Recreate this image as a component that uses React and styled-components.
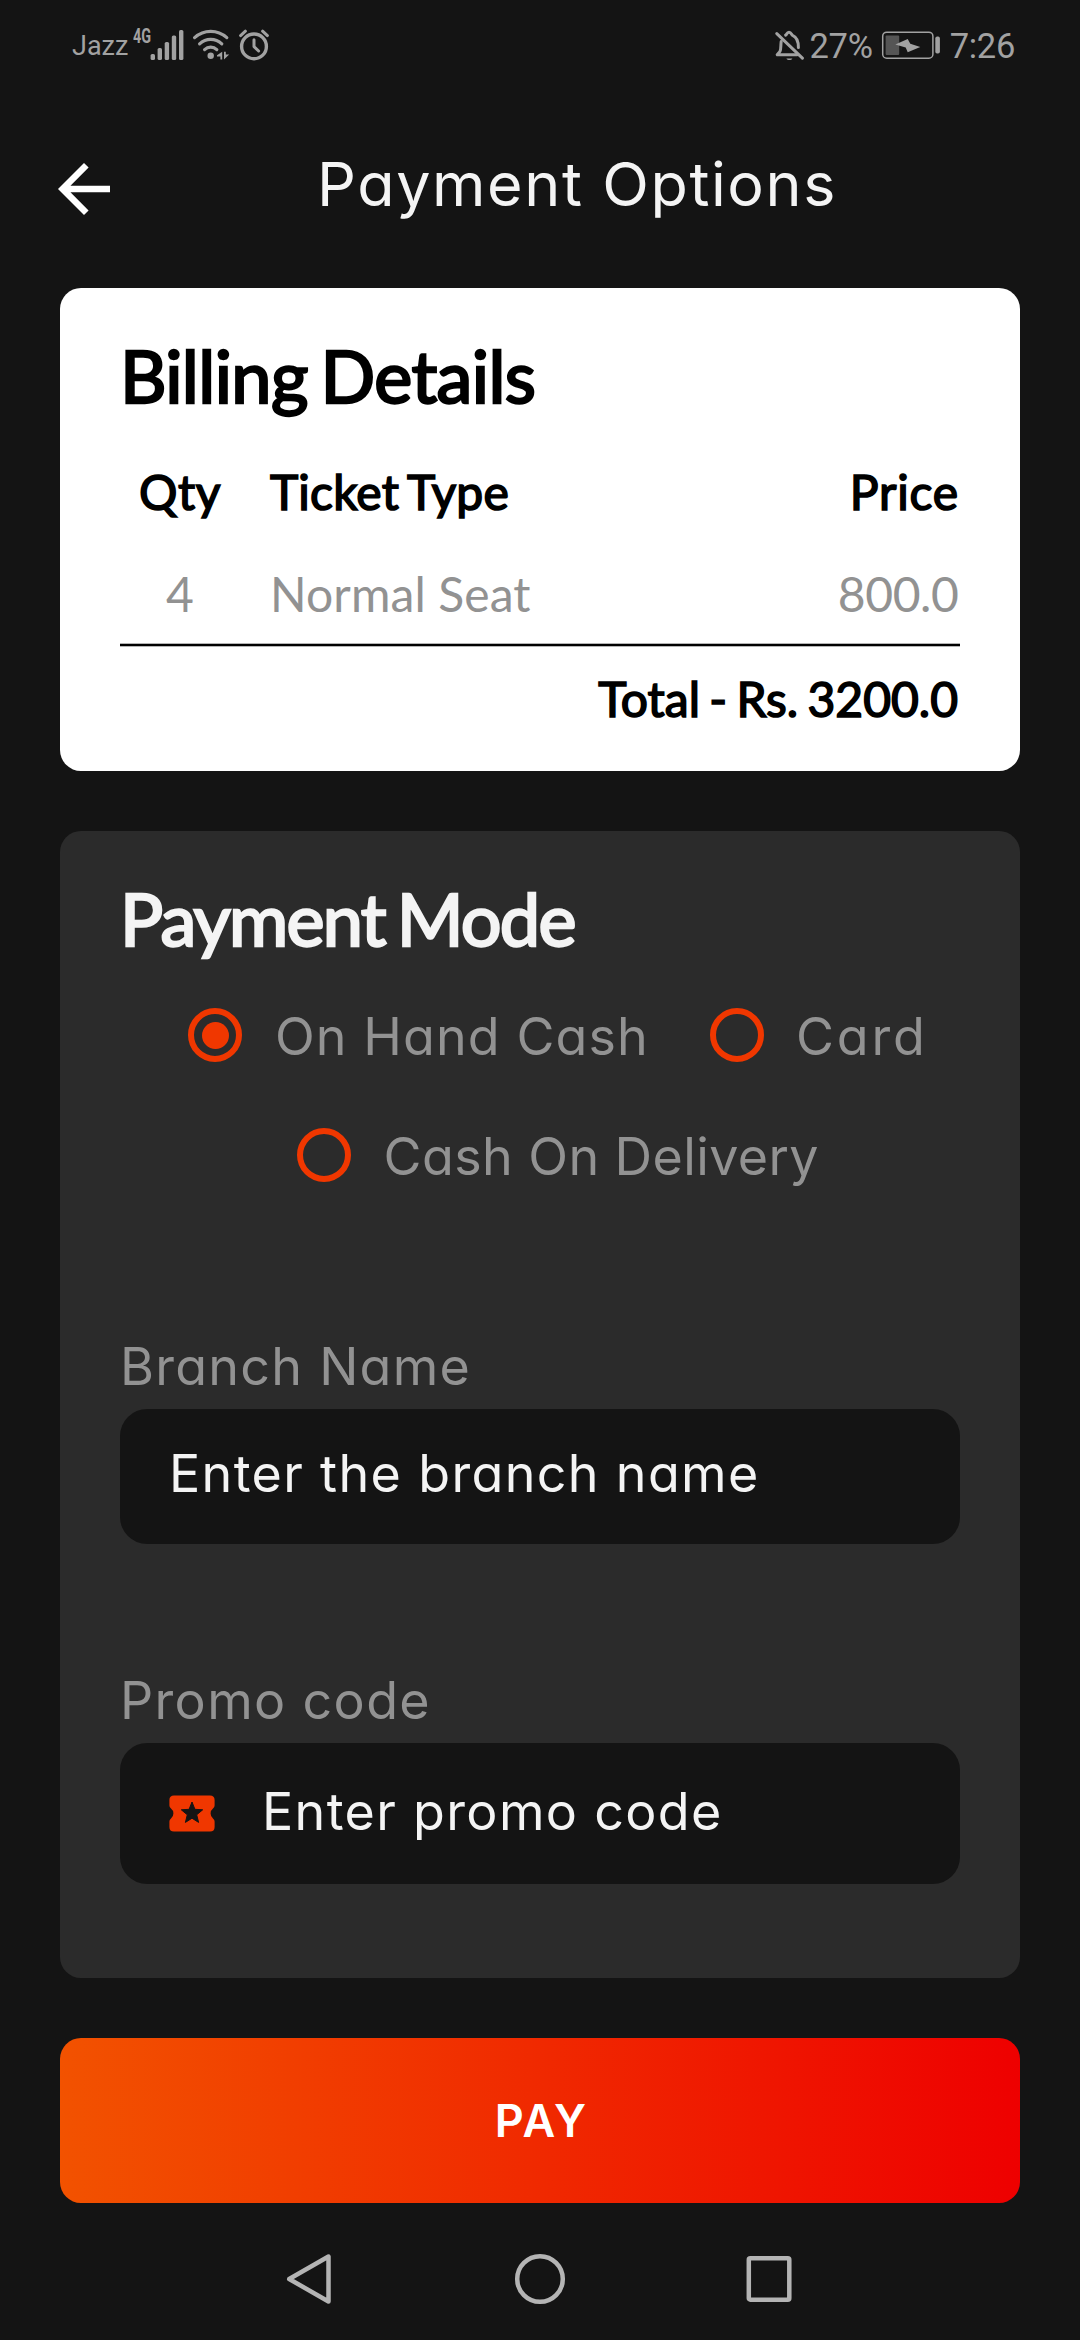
import React, { useState } from "react";
import styled, { createGlobalStyle } from "styled-components";

const GlobalStyle = createGlobalStyle`
  *, *::before, *::after { box-sizing: border-box; }
  body { margin: 0; background: #141414; }
`;

const sans = `Inter, "Open Sans", sans-serif`;
const lato = `Lato, "Open Sans", sans-serif`;

const Screen = styled.div`
  width: 1080px;
  height: 2340px;
  background: #141414;
  display: flex;
  flex-direction: column;
  font-family: ${sans};
  font-feature-settings: "cv11";
  overflow: hidden;
`;

/* ---------- status bar ---------- */

const StatusBar = styled.div`
  height: 90px;
  padding: 0 65px 0 72px;
  display: flex;
  justify-content: space-between;
  color: #a2a2a2;
  font-family: Roboto, sans-serif;
`;

const StatusGroup = styled.div`
  display: flex;
  align-items: center;
`;

const Carrier = styled.span`
  font-size: 27px;
  line-height: 32px;
  padding-top: 1px;
  width: 61px;
`;

const NetworkType = styled.span`
  align-self: flex-start;
  margin-top: 24px;
  width: 17px;
  font-size: 20px;
  line-height: 24px;
  font-weight: 700;
  transform: scaleX(0.72);
  transform-origin: left center;
`;

const StatusText = styled.span`
  font-size: 34.5px;
  line-height: 40px;
  padding-top: 2px;
  letter-spacing: -0.3px;
`;

const StatusIcon = styled.svg`
  display: block;
  flex: none;
  margin-left: ${(p) => p.$gap || 0}px;
  margin-right: ${(p) => p.$after || 0}px;
`;

/* ---------- header ---------- */

const Header = styled.header`
  height: 198px;
  padding: 60px 0 0 45px;
  display: flex;
  align-items: flex-start;
`;

const BackButton = styled.button`
  width: 78px;
  height: 78px;
  padding: 0;
  border: 0;
  background: none;
  color: #fff;
  flex: none;
`;

const HeaderTitle = styled.h1`
  margin: 0 0 0 194px;
  font-size: 61px;
  font-weight: 400;
  line-height: 69px;
  letter-spacing: 1.6px;
  color: #f4f4f4;
  white-space: nowrap;
`;

/* ---------- cards ---------- */

const Card = styled.section`
  margin: 0 60px;
  padding: 42px 60px 0;
  border-radius: 21px;
`;

const BillingCard = styled(Card)`
  height: 483px;
  background: #fff;
  font-family: ${lato};
`;

const PaymentCard = styled(Card)`
  height: 1147px;
  margin-top: 60px;
  background: #2b2b2b;
`;

const CardTitle = styled.h2`
  margin: 0;
  font-family: ${lato};
  font-size: 72px;
  font-weight: 400;
  line-height: 90px;
  letter-spacing: ${(p) => p.$tracking}px;
  word-spacing: -5px;
  color: ${(p) => p.$color};
  -webkit-text-stroke: 2.4px ${(p) => p.$color};
  white-space: nowrap;
`;

const TicketRow = styled.div`
  display: grid;
  grid-template-columns: 120px 1fr auto;
  align-items: center;
  height: ${(p) => p.$height}px;
  font-size: 48px;
  color: #929292;
`;

const HeadRow = styled(TicketRow)`
  margin-top: 20px;
  color: #000;
  word-spacing: -3px;
  -webkit-text-stroke: 1.6px #000;
`;

const Cell = styled.span`
  white-space: nowrap;
  text-align: ${(p) => p.$align || "left"};
  padding-left: ${(p) => p.$indent || 0}px;
  padding-right: ${(p) => p.$end || 0}px;
  letter-spacing: ${(p) => p.$tracking || 0}px;
`;

const Divider = styled.div`
  height: 4px;
  background: #000;
  border: solid #b4b4b4;
  border-width: 1px 0;
`;

const Total = styled.div`
  height: 103px;
  line-height: 103px;
  padding-right: 2px;
  text-align: right;
  font-size: 48px;
  word-spacing: -3px;
  color: #000;
  -webkit-text-stroke: 1.6px #000;
`;

/* ---------- payment mode ---------- */

const Options = styled.div`
  display: flex;
  flex-wrap: wrap;
  justify-content: center;
  margin-top: 12px;
`;

const Option = styled.label`
  height: 120px;
  padding: 0 12.3px 0 48.3px;
  display: flex;
  align-items: center;
  gap: 32.5px;
`;

const Radio = styled.input`
  appearance: none;
  width: 54px;
  height: 54px;
  margin: 0;
  flex: none;
  border: 6px solid #f03700;
  border-radius: 50%;
  display: grid;
  place-items: center;

  &:checked::before {
    content: "";
    width: 27px;
    height: 27px;
    border-radius: 50%;
    background: #f03700;
  }
`;

const OptionLabel = styled.span`
  padding-top: 3.6px;
  font-size: 52px;
  line-height: 60px;
  letter-spacing: ${(p) => p.$tracking}px;
  color: #929292;
  white-space: nowrap;
`;

const FieldLabel = styled.label`
  display: block;
  margin: ${(p) => p.$top}px 0 ${(p) => p.$bottom}px;
  font-size: 52px;
  line-height: 60px;
  letter-spacing: ${(p) => p.$tracking}px;
  color: #929292;
`;

const Field = styled.div`
  height: ${(p) => p.$height}px;
  padding: 0 49px 4px;
  display: flex;
  align-items: center;
  background: #141414;
  border-radius: 27px;
`;

const FieldInput = styled.input`
  flex: 1;
  min-width: 0;
  height: 64px;
  margin: 0 0 0 ${(p) => p.$indent || 0}px;
  padding: 0;
  border: 0;
  outline: 0;
  background: none;
  font-family: inherit;
  font-feature-settings: inherit;
  font-size: 52px;
  line-height: 64px;
  letter-spacing: 1.35px;
  color: #f4f4f4;

  &::placeholder {
    color: #f4f4f4;
    opacity: 1;
  }
`;

const TicketIcon = styled.svg`
  flex: none;
  margin-top: 4px;
`;

/* ---------- footer ---------- */

const PayButton = styled.button`
  flex: none;
  height: 165px;
  margin: 60px 60px 0;
  padding: 0 0 0 3px;
  border: 0;
  border-radius: 21px;
  background: linear-gradient(90deg, #f25200, #ee0000);
  color: #fff;
  font-family: ${sans};
  font-size: 45px;
  font-weight: 600;
  letter-spacing: 2.2px;
`;

const NavBar = styled.nav`
  height: 137px;
  padding-top: 15px;
  display: flex;
  justify-content: center;
  align-items: center;
  gap: 175px;
  color: #b4b4b4;
`;

const NavIcon = ({ children }) => (
  <svg width="60" height="60" viewBox="0 0 60 60" fill="none" stroke="currentColor" strokeWidth="4.5" strokeLinejoin="round">
    {children}
  </svg>
);

const modes = [
  { label: "On Hand Cash", tracking: 1.1 },
  { label: "Card", tracking: 2.8 },
  { label: "Cash On Delivery", tracking: 0.4 },
];

export default function App() {
  const [mode, setMode] = useState("On Hand Cash");
  return (
    <Screen>
      <GlobalStyle />
      <StatusBar>
        <StatusGroup>
          <Carrier>Jazz</Carrier>
          <NetworkType>4G</NetworkType>
          <StatusIcon width="34" height="32" viewBox="0 0 34 32" fill="currentColor">
            <rect x="0.6" y="25" width="4.4" height="6" rx="1.6" />
            <rect x="7.6" y="19" width="4.4" height="12" rx="1.6" />
            <rect x="14.7" y="13" width="4.4" height="18" rx="1.6" />
            <rect x="21.8" y="6.5" width="4.4" height="24.5" rx="1.6" />
            <rect x="29" y="1" width="4.4" height="30" rx="1.6" />
          </StatusIcon>
          <StatusIcon $gap={8} width="38" height="32" viewBox="0 0 38 32" fill="none" stroke="currentColor" strokeLinecap="round">
            <path d="M2.6 8.6C12 .2 25.4 .2 34.8 8.6" strokeWidth="3.2" />
            <path d="M7.6 14.8C14 8.8 23.4 8.8 29.8 14.8" strokeWidth="3.2" />
            <path d="M12.6 20.6C16 17.4 21.4 17.4 24.8 20.6" strokeWidth="3.2" />
            <circle cx="18.7" cy="26.8" r="3.2" fill="currentColor" stroke="none" />
            <path d="M30.2 22.8V30.4H28.4V27.6H25V26.2Z" fill="currentColor" stroke="none" />
            <path d="M32 22.8H33.8V25.4H37.2L32 30.4Z" fill="currentColor" stroke="none" />
          </StatusIcon>
          <StatusIcon $gap={9} width="30" height="32" viewBox="0 0 30 32" fill="none" stroke="currentColor" strokeLinecap="round" strokeLinejoin="round">
            <circle cx="15" cy="17.4" r="12.4" strokeWidth="3.4" />
            <path d="M15 10.8V17.6L19.6 22" strokeWidth="3" />
            <path d="M1.6 6.6L6.4 2.2M28.4 6.6L23.6 2.2" strokeWidth="3" />
          </StatusIcon>
        </StatusGroup>
        <StatusGroup>
          <StatusIcon $after={6} width="30" height="34" viewBox="0 0 30 34" fill="none" stroke="currentColor" strokeLinecap="round" strokeLinejoin="round">
            <path d="M2.8 5.6L28.4 30.2" strokeWidth="3" />
            <path d="M7.2 13.4C6.6 17 7.2 21 6 23.4L3.2 26.8H23" strokeWidth="3" />
            <path d="M11.6 7.2C12.8 6.6 12.8 4.2 15 4.2C17.4 4.2 17.2 6.6 18.6 7.3C23.6 9.4 24.4 13.6 24.4 19.4" strokeWidth="3" />
            <path d="M12.4 30.4H18.4C17.4 32.6 13.4 32.6 12.4 30.4Z" fill="currentColor" stroke="none" />
          </StatusIcon>
          <StatusText>27%</StatusText>
          <StatusIcon $gap={8.5} $after={8.5} width="60" height="30" viewBox="0 0 60 30">
            <rect x="1.7" y="2.2" width="50.2" height="26" rx="4" fill="none" stroke="currentColor" strokeWidth="1.5" />
            <rect x="4.6" y="5.4" width="13.6" height="19.6" rx="1" fill="#555" />
            <path d="M14.3 14.6L26.7 9L29.3 13.8L39.3 17L26.7 22.2L24.7 17.6Z" fill="currentColor" />
            <rect x="54.3" y="6.6" width="4.6" height="17" rx="1.8" fill="currentColor" />
          </StatusIcon>
          <StatusText>7:26</StatusText>
        </StatusGroup>
      </StatusBar>

      <Header>
        <BackButton aria-label="Back">
          <svg width="78" height="78" viewBox="0 0 24 24" fill="currentColor">
            <path d="M20 11H7.83l5.59-5.59L12 4l-8 8 8 8 1.41-1.41L7.83 13H20v-2z" />
          </svg>
        </BackButton>
        <HeaderTitle>Payment Options</HeaderTitle>
      </Header>

      <BillingCard>
        <CardTitle $color="#000" $tracking={-0.6}>Billing Details</CardTitle>
        <HeadRow $height={103}>
          <Cell $align="center" $tracking={0.5}>Qty</Cell>
          <Cell $indent={30} $tracking={0.17}>Ticket Type</Cell>
          <Cell $end={1} $tracking={0.8}>Price</Cell>
        </HeadRow>
        <TicketRow $height={100}>
          <Cell $align="center">4</Cell>
          <Cell $indent={30} $tracking={0.1}>Normal Seat</Cell>
          <Cell $end={1.5} $tracking={-0.4}>800.0</Cell>
        </TicketRow>
        <Divider />
        <Total>Total - Rs. 3200.0</Total>
      </BillingCard>

      <PaymentCard>
        <CardTitle $color="#f4f4f4" $tracking={-1.7}>Payment Mode</CardTitle>
        <Options>
          {modes.map((m) => (
            <Option key={m.label}>
              <Radio type="radio" name="mode" checked={mode === m.label} onChange={() => setMode(m.label)} />
              <OptionLabel $tracking={m.tracking}>{m.label}</OptionLabel>
            </Option>
          ))}
        </Options>
        <FieldLabel htmlFor="branch" $top={122} $bottom={11.5} $tracking={1.25}>Branch Name</FieldLabel>
        <Field $height={135}>
          <FieldInput id="branch" placeholder="Enter the branch name" />
        </Field>
        <FieldLabel htmlFor="promo" $top={127.5} $bottom={12} $tracking={1.35}>Promo code</FieldLabel>
        <Field $height={141}>
          <TicketIcon width="46" height="37" viewBox="0 0 46 37">
            <path
              d="M5 0.5H41Q45.6 0.5 45.6 5V10.6Q45.6 12.2 44.2 13.2Q41.6 15.2 41.6 18.5Q41.6 21.8 44.2 23.8Q45.6 24.8 45.6 26.4V32Q45.6 36.5 41 36.5H5Q0.4 36.5 0.4 32V26.4Q0.4 24.8 1.8 23.8Q4.4 21.8 4.4 18.5Q4.4 15.2 1.8 13.2Q0.4 12.2 0.4 10.6V5Q0.4 0.5 5 0.5Z"
              fill="#f03700"
            />
            <path
              d="M23 7L25.9 14.3L33.7 14.8L27.7 19.8L29.6 27.4L23 23.2L16.4 27.4L18.3 19.8L12.3 14.8L20.1 14.3Z"
              fill="#141414"
              stroke="#141414"
              strokeWidth="1"
              strokeLinejoin="round"
            />
          </TicketIcon>
          <FieldInput id="promo" $indent={47} placeholder="Enter promo code" />
        </Field>
      </PaymentCard>

      <PayButton>PAY</PayButton>

      <NavBar>
        <NavIcon>
          <path d="M53.5 7.5V52.5L14.2 30Z" />
        </NavIcon>
        <NavIcon>
          <circle cx="30" cy="30" r="22.8" />
        </NavIcon>
        <NavIcon>
          <rect x="3.8" y="9.2" width="40.5" height="41.5" rx="1.5" />
        </NavIcon>
      </NavBar>
    </Screen>
  );
}
